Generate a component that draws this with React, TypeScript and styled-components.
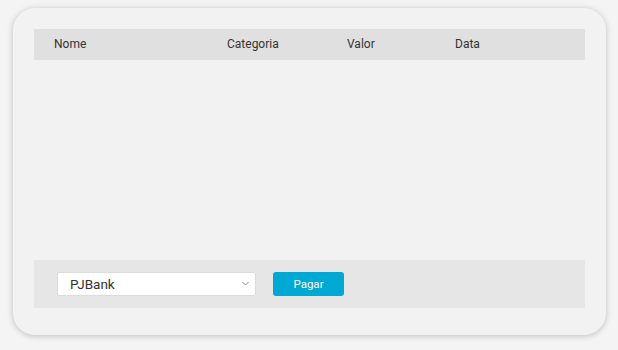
import React from 'react';
import styled, {createGlobalStyle} from 'styled-components';

const GlobalStyle = createGlobalStyle`
  body {
    margin: 0;
    background: #f4f4f4;
    font-family: Roboto, "Liberation Sans", sans-serif;
  }
`;

const Page = styled.div`
  padding: 8px 12px 15px 13px;
`;

const Card = styled.div`
  width: 593px;
  height: 327px;
  box-sizing: border-box;
  padding: 21px 21px 27px 21px;
  background: #f2f2f2;
  border-radius: 22px;
  box-shadow: 0 1px 6px rgba(0, 0, 0, 0.22);
  display: flex;
  flex-direction: column;
`;

const HeaderRow = styled.div`
  display: grid;
  grid-template-columns: 173px 120px 108px 1fr;
  align-items: center;
  height: 31px;
  padding-left: 20px;
  padding-bottom: 1px;
  box-sizing: border-box;
  background: #e0e0e0;
`;

const HeaderCell = styled.span`
  font-size: 12px;
  color: #333;
`;

const Body = styled.div`
  flex: 1;
`;

const Footer = styled.div`
  display: flex;
  align-items: center;
  gap: 17px;
  height: 48px;
  padding-left: 23px;
  background: #e6e6e6;
`;

const SelectBox = styled.div`
  position: relative;
  width: 199px;
  height: 24px;
  box-sizing: border-box;
  background: #fff;
  border: 1px solid #dcdcdc;
  border-radius: 2px;
  display: flex;
  align-items: center;
  padding-left: 12px;
  font-size: 13.5px;
  color: #333;
`;

const Chevron = styled.svg`
  position: absolute;
  right: 6px;
  top: 8px;
`;

const PayButton = styled.button`
  width: 71px;
  height: 24px;
  border: none;
  border-radius: 3px;
  background: #00a8d4;
  color: #fff;
  font-family: Roboto, "Liberation Sans", sans-serif;
  font-size: 11.5px;
  cursor: pointer;
`;

const columns = ['Nome', 'Categoria', 'Valor', 'Data'];

export default function App() {
    return (<Page>
        <GlobalStyle/>
        <Card>
            <HeaderRow>
                {columns.map((c) => <HeaderCell key={c}>{c}</HeaderCell>)}
            </HeaderRow>
            <Body/>
            <Footer>
                <SelectBox>
                    PJBank
                    <Chevron width="7" height="5" viewBox="0 0 7 5">
                        <path d="M0.5 1 L3.5 4 L6.5 1" fill="none" stroke="#888" strokeWidth="1"/>
                    </Chevron>
                </SelectBox>
                <PayButton>Pagar</PayButton>
            </Footer>
        </Card>
    </Page>);
}
